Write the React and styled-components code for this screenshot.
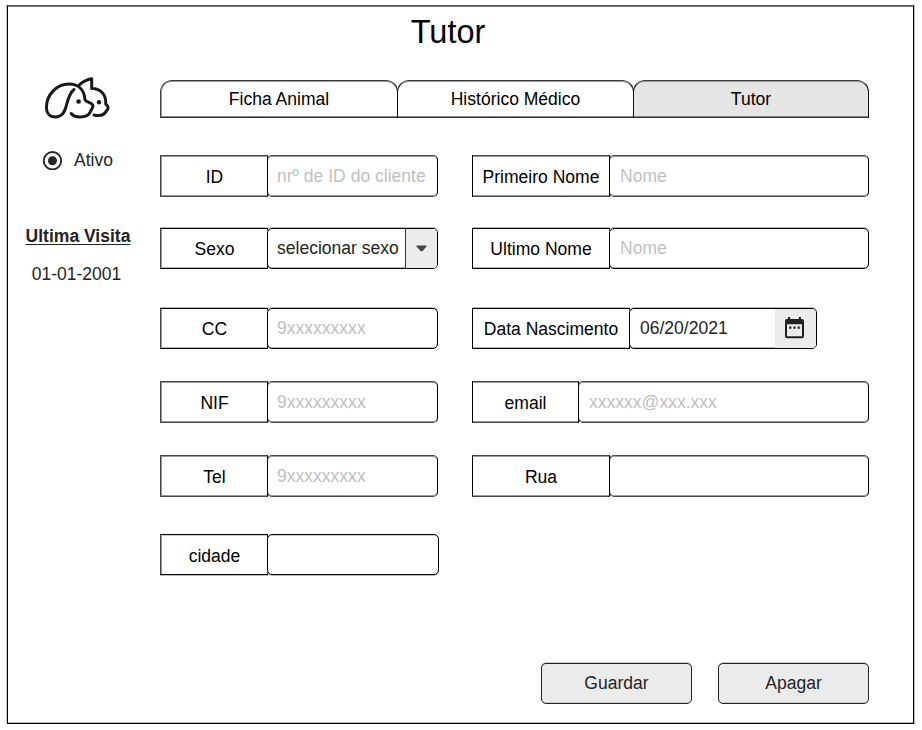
import React from 'react';
import styled, { createGlobalStyle } from 'styled-components';

const Global = createGlobalStyle`
  *, *::before, *::after { box-sizing: border-box; }
  body { margin: 0; background: #fff; }
`;

const INK = '#242424';
const FONT = "17.55px/20px 'Liberation Sans', Arial, sans-serif";

const Frame = styled.main`
  width: 907px;
  height: 719px;
  margin: 5px 0 0 7px;
  border: 1px solid #000;
  border-top-color: #555;
  box-shadow: inset 0 1px #777, 1px 0 #bbb, inset 0 -1px #bbb, -1px 0 #ccc;
  background: #fff;
  font: ${FONT};
  color: #000;
  display: flex;
  flex-direction: column;
`;

const Title = styled.h1`
  margin: 6px 0 0;
  padding-right: 25px;
  height: 40px;
  font-size: 32.5px;
  line-height: 40px;
  font-weight: 400;
  text-align: center;
`;

const Body = styled.div`
  display: flex;
`;

const Sidebar = styled.aside`
  width: 152px;
  display: flex;
  flex-direction: column;
  align-items: center;
  padding: 24px 12px 0 0;
  color: ${INK};
`;

const Logo = styled.svg`
  width: 68px;
  height: 44px;
`;

const Status = styled.label`
  display: flex;
  align-items: center;
  gap: 11px;
  margin-top: 30px;
  height: 20px;
`;

const VisitTitle = styled.h2`
  margin: 56px 0 0;
  font: inherit;
  font-weight: 700;
  white-space: nowrap;
  text-decoration: underline;
  text-decoration-thickness: 1px;
  text-underline-offset: 2px;
`;

const VisitDate = styled.span`
  margin-top: 18px;
  padding-right: 3px;
`;

const Content = styled.section`
  width: 709px;
  padding-top: 28px;
`;

const Tabs = styled.nav`
  display: flex;
`;

const Tab = styled.button`
  flex: 0 0 ${p => p.$width}px;
  height: 38px;
  margin: 0 0 0 ${p => (p.$first ? 0 : -1)}px;
  padding: 0 0 1px;
  border: 1px solid #111;
  border-top-color: #3a3a3a;
  border-bottom-color: #333;
  border-left-color: ${p => (p.$first ? '#444' : '#111')};
  border-radius: 12px 12px 0 0;
  box-shadow: inset 0 1px #999, inset 0 -1px #888${p => (p.$first ? ', inset 1px 0 #999' : '')};
  background: ${p => (p.$active ? '#e5e5e5' : '#fff')};
  font: inherit;
  color: inherit;
`;

const Form = styled.form`
  display: grid;
  grid-template-columns: 279px 397px;
  column-gap: 33px;
  grid-template-rows: 72px 80px 74px 74px 79px 42px;
  margin-top: 37px;
`;

const edge = {
  even: { border: '#484848', shadow: 'inset 0 1px #999, inset 0 -1px #999' },
  low: { border: '#000', shadow: '0 -1px #bbb, inset 0 -1px #bbb' },
  high: { border: '#000', shadow: 'inset 0 1px #ccc, 0 1px #bbb' },
};

const Label = styled.label`
  flex: 0 0 ${p => p.$width}px;
  display: flex;
  align-items: center;
  justify-content: center;
  padding-top: ${p => (p.$edge === 'high' ? 2 : 1)}px;
`;

const Control = styled.div`
  flex: 1;
  min-width: 0;
  margin-left: -1px;
  display: flex;
  align-items: stretch;
  border-radius: 5px;
  background: #fff;
  color: ${INK};
  overflow: hidden;
`;

const Field = styled.div`
  display: flex;
  width: ${p => p.$width}px;
  height: ${p => (p.$edge === 'even' ? 42 : 41)}px;
  margin-top: ${p => (p.$edge === 'low' ? 1 : 0)}px;

  & > * {
    border-style: solid;
    border-width: 1px;
    border-color: ${p => edge[p.$edge].border} #000;
    box-shadow: ${p => edge[p.$edge].shadow};
  }

  &:nth-child(odd) > ${Label} {
    border-left-color: #444;
    box-shadow: ${p => edge[p.$edge].shadow}, inset 1px 0 #999;
    padding-left: 1px;
  }

  &:nth-child(even) > ${Control} {
    padding-left: 1px;
  }
`;

const Input = styled.input`
  flex: 1;
  min-width: 0;
  padding: 0 0 ${p => (p.$edge === 'low' ? 2 : 0)}px 9px;
  margin: 0;
  border: 0;
  outline: 0;
  background: transparent;
  font: inherit;
  color: inherit;
  &::placeholder { color: #bfbfbf; opacity: 1; }
`;

const Value = styled.span`
  flex: 1;
  align-self: center;
  padding: 0 0 1px 9px;
  white-space: nowrap;
`;

const Addon = styled.span`
  width: ${p => p.$width}px;
  display: flex;
  align-items: center;
  justify-content: center;
  padding: ${p => (p.$divided ? 0 : '0 2px 2px 0')};
  background: #ebebeb;
  border-left: ${p => (p.$divided ? '1px solid #333' : '0')};
`;

const Actions = styled.footer`
  display: flex;
  gap: 26px;
  justify-content: flex-end;
  margin-top: 87px;
`;

const Button = styled.button`
  width: 151px;
  height: 41px;
  padding: 0 0 1px;
  border: 1px solid ${INK};
  border-radius: 5px;
  box-shadow: 0 -1px #ccc, inset 0 -1px #ccc;
  background: #ebebeb;
  font: inherit;
  color: ${INK};
`;

function PetLogo() {
  return (
    <Logo viewBox="44 76 68 44" fill="none" stroke="#191919" strokeWidth="3" strokeLinecap="round" strokeLinejoin="round">
      <path d="M74 89.5C69.5 93 68 99 66.5 105C65 112 62.5 117 55.5 117C49.5 117 46.4 113 46.4 107.500C46.4 94.5 57 84 69 84C79 84 84.500 90.500 85 100C88 103 93 103 93 106C93 108 91 109.500 90.500 111.500C89 115.500 84.500 117 80 117C76 117 73 116 71.200 113.500" />
      <path d="M79.500 84.700C83 81.500 87 79.500 91.700 78.700V88.500C100 88.200 106.500 94.500 105.700 104C109 106.500 108.500 109 106.700 110.500C104.500 115 100 116.500 94 115" />
      <circle cx="78.600" cy="101.500" r="2.300" fill="#191919" stroke="none" />
      <circle cx="99" cy="102.300" r="2.200" fill="#191919" stroke="none" />
    </Logo>
  );
}

function RadioIcon() {
  return (
    <svg width="20" height="20" viewBox="0 0 20 20">
      <circle cx="9.500" cy="10.700" r="8.700" fill="none" stroke={INK} strokeWidth="1.900" />
      <circle cx="9.500" cy="10.700" r="4.500" fill={INK} />
    </svg>
  );
}

function CalendarIcon() {
  return (
    <svg width="19" height="22" viewBox="0 0 19 22">
      <path fill="#222" fillRule="evenodd" d="M3 0h2.200v2h8.600V0H16v2h1q2 0 2 2v15.300q0 2-2 2H2q-2 0-2-2V4q0-2 2-2h1zM2 7.200v12.100h15V7.200z" />
      <path fill="#222" d="M4.200 9.500h2.200v2.200H4.200zM8.400 9.500h2.200v2.200H8.400zM12.600 9.500h2.200v2.200h-2.200z" />
    </svg>
  );
}

const fields = [
  { label: 'ID', lw: 108, w: 278, edge: 'even', hint: 'nrº de ID do cliente' },
  { label: 'Primeiro Nome', lw: 138, w: 397, edge: 'even', hint: 'Nome' },
  { label: 'Sexo', lw: 108, w: 278, edge: 'low', kind: 'select', value: 'selecionar sexo' },
  { label: 'Ultimo Nome', lw: 138, w: 397, edge: 'low', hint: 'Nome' },
  { label: 'CC', lw: 108, w: 278, edge: 'low', hint: '9xxxxxxxxx' },
  { label: 'Data Nascimento', lw: 158, w: 345, edge: 'low', kind: 'date', value: '06/20/2021' },
  { label: 'NIF', lw: 108, w: 278, edge: 'even', hint: '9xxxxxxxxx' },
  { label: 'email', lw: 107, w: 397, edge: 'even', hint: 'xxxxxx@xxx.xxx' },
  { label: 'Tel', lw: 108, w: 278, edge: 'even', hint: '9xxxxxxxxx' },
  { label: 'Rua', lw: 138, w: 397, edge: 'even' },
  { label: 'cidade', lw: 108, w: 279, edge: 'high' },
];

function FormField({ label, lw, w, edge: rowEdge, hint, kind, value }) {
  return (
    <Field $width={w} $edge={rowEdge}>
      <Label $width={lw} $edge={rowEdge}>{label}</Label>
      <Control>
        {kind ? <Value>{value}</Value> : <Input aria-label={label} placeholder={hint} $edge={rowEdge} />}
        {kind === 'select' && (
          <Addon $width={32} $divided>
            <svg width="11" height="7" viewBox="0 0 11 7">
              <path fill="#444" d="M1 .5h9q1 0 .5 1L6.800 5.700q-1.300 1-2.600 0L.5 1.500Q0 .5 1 .5z" />
            </svg>
          </Addon>
        )}
        {kind === 'date' && <Addon $width={41}><CalendarIcon /></Addon>}
      </Control>
    </Field>
  );
}

export default function App() {
  return (
    <>
      <Global />
      <Frame>
        <Title>Tutor</Title>
        <Body>
          <Sidebar>
            <PetLogo />
            <Status><RadioIcon />Ativo</Status>
            <VisitTitle>Ultima Visita</VisitTitle>
            <VisitDate>01-01-2001</VisitDate>
          </Sidebar>
          <Content>
            <Tabs>
              <Tab $first $width={238}>Ficha Animal</Tab>
              <Tab $width={237}>Histórico Médico</Tab>
              <Tab $width={236} $active>Tutor</Tab>
            </Tabs>
            <Form>
              {fields.map(f => <FormField key={f.label} {...f} />)}
            </Form>
            <Actions>
              <Button>Guardar</Button>
              <Button>Apagar</Button>
            </Actions>
          </Content>
        </Body>
      </Frame>
    </>
  );
}
